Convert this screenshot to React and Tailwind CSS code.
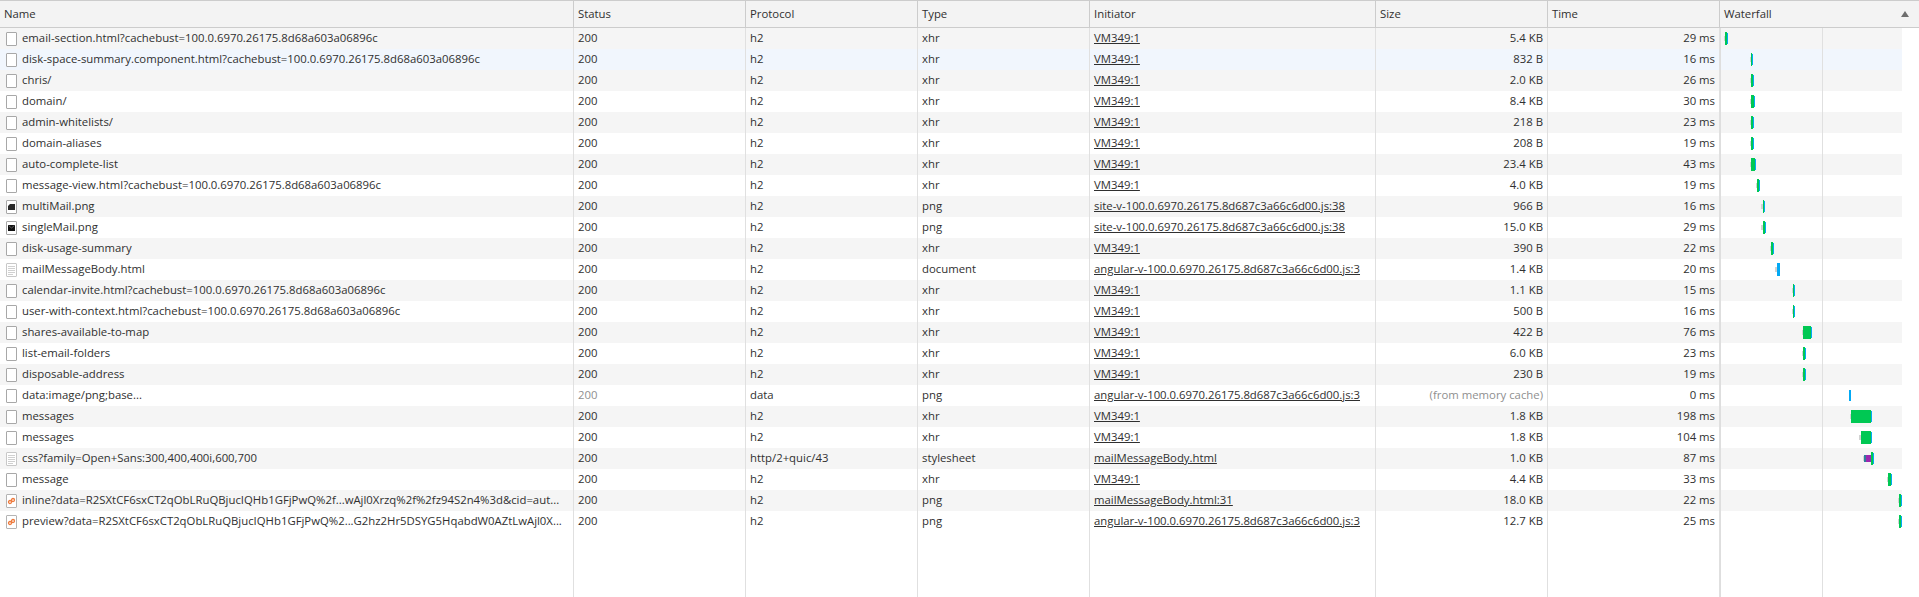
const COLS = "grid grid-cols-[574px_172px_172px_172px_286px_172px_172px_183px]";

const SITE = "site-v-100.0.6970.26175.8d687c3a66c6d00.js:38";
const NG = "angular-v-100.0.6970.26175.8d687c3a66c6d00.js:3";
const BODY = "mailMessageBody.html";
const VM = "VM349:1";

// gray = queued, green = waiting, blue = download; [start x, end x] in page pixels
const ROWS = [
  { name: "email-section.html?cachebust=100.0.6970.26175.8d68a603a06896c", proto: "h2", type: "xhr", init: VM, size: "5.4 KB", time: "29 ms", gray: [1724, 1725], green: [1725, 1727], blue: [1727, 1728] },
  { name: "disk-space-summary.component.html?cachebust=100.0.6970.26175.8d68a603a06896c", proto: "h2", type: "xhr", init: VM, size: "832 B", time: "16 ms", hover: true, gray: [1750, 1751], green: [1751, 1752], blue: [1752, 1753] },
  { name: "chris/", proto: "h2", type: "xhr", init: VM, size: "2.0 KB", time: "26 ms", gray: [1750, 1751], green: [1751, 1753], blue: [1753, 1754] },
  { name: "domain/", proto: "h2", type: "xhr", init: VM, size: "8.4 KB", time: "30 ms", gray: [1750, 1751], green: [1751, 1754], blue: [1754, 1755] },
  { name: "admin-whitelists/", proto: "h2", type: "xhr", init: VM, size: "218 B", time: "23 ms", gray: [1750, 1751], green: [1751, 1753], blue: [1753, 1754] },
  { name: "domain-aliases", proto: "h2", type: "xhr", init: VM, size: "208 B", time: "19 ms", gray: [1750, 1751], green: [1751, 1753], blue: [1753, 1754] },
  { name: "auto-complete-list", proto: "h2", type: "xhr", init: VM, size: "23.4 KB", time: "43 ms", gray: [1750, 1751], green: [1751, 1755], blue: [1755, 1756] },
  { name: "message-view.html?cachebust=100.0.6970.26175.8d68a603a06896c", proto: "h2", type: "xhr", init: VM, size: "4.0 KB", time: "19 ms", gray: [1756, 1757], green: [1757, 1759], blue: [1759, 1760] },
  { name: "multiMail.png", icon: "multi", proto: "h2", type: "png", init: SITE, size: "966 B", time: "16 ms", gray: [1761, 1763], green: [1763, 1764], blue: [1764, 1765] },
  { name: "singleMail.png", icon: "single", proto: "h2", type: "png", init: SITE, size: "15.0 KB", time: "29 ms", gray: [1761, 1763], green: [1763, 1765], blue: [1765, 1766] },
  { name: "disk-usage-summary", proto: "h2", type: "xhr", init: VM, size: "390 B", time: "22 ms", gray: [1770, 1771], green: [1771, 1773], blue: [1773, 1774] },
  { name: "mailMessageBody.html", icon: "lines", proto: "h2", type: "document", init: NG, size: "1.4 KB", time: "20 ms", gray: [1775, 1777], blue: [1777, 1780], tallBlue: true },
  { name: "calendar-invite.html?cachebust=100.0.6970.26175.8d68a603a06896c", proto: "h2", type: "xhr", init: VM, size: "1.1 KB", time: "15 ms", gray: [1792, 1793], green: [1793, 1794], blue: [1794, 1795] },
  { name: "user-with-context.html?cachebust=100.0.6970.26175.8d68a603a06896c", proto: "h2", type: "xhr", init: VM, size: "500 B", time: "16 ms", gray: [1792, 1793], green: [1793, 1794], blue: [1794, 1795] },
  { name: "shares-available-to-map", proto: "h2", type: "xhr", init: VM, size: "422 B", time: "76 ms", gray: [1802, 1803], green: [1803, 1811], blue: [1811, 1812] },
  { name: "list-email-folders", proto: "h2", type: "xhr", init: VM, size: "6.0 KB", time: "23 ms", gray: [1802, 1803], green: [1803, 1805], blue: [1805, 1806] },
  { name: "disposable-address", proto: "h2", type: "xhr", init: VM, size: "230 B", time: "19 ms", gray: [1802, 1803], green: [1803, 1805], blue: [1805, 1806] },
  { name: "data:image/png;base...", proto: "data", type: "png", init: NG, size: "(from memory cache)", time: "0 ms", cached: true, blue: [1849, 1851] },
  { name: "messages", proto: "h2", type: "xhr", init: VM, size: "1.8 KB", time: "198 ms", gray: [1850, 1851], green: [1851, 1871], blue: [1871, 1872] },
  { name: "messages", proto: "h2", type: "xhr", init: VM, size: "1.8 KB", time: "104 ms", gray: [1859, 1861], green: [1861, 1871], blue: [1871, 1872] },
  { name: "css?family=Open+Sans:300,400,400i,600,700", icon: "lines", proto: "http/2+quic/43", type: "stylesheet", init: BODY, size: "1.0 KB", time: "87 ms", gray: [1863, 1865], ssl: true, green: [1871, 1873], blue: [1873, 1874] },
  { name: "message", proto: "h2", type: "xhr", init: VM, size: "4.4 KB", time: "33 ms", gray: [1887, 1888], green: [1888, 1891], blue: [1891, 1892] },
  { name: "inline?data=R2SXtCF6sxCT2qObLRuQBjucIQHb1GFjPwQ%2f...wAjl0Xrzq%2f%2fz94S2n4%3d&cid=aut...", icon: "image", proto: "h2", type: "png", init: "mailMessageBody.html:31", size: "18.0 KB", time: "22 ms", gray: [1898, 1899], green: [1899, 1901], blue: [1901, 1902] },
  { name: "preview?data=R2SXtCF6sxCT2qObLRuQBjucIQHb1GFjPwQ%2...G2hz2Hr5DSYG5HqabdW0AZtLwAjl0X...", icon: "image", proto: "h2", type: "png", init: NG, size: "12.7 KB", time: "25 ms", gray: [1898, 1899], green: [1899, 1901], blue: [1901, 1902] },
];

function FileIcon({ kind }) {
  const border = kind === "lines" ? "#c8c8c8" : kind === "image" ? "#b4b4b4" : "#a8a8a8";
  return (
    <svg width="11" height="14" viewBox="0 0 11 14" className="shrink-0">
      <rect x="0.5" y="0.5" width="10" height="13" rx="0.5" fill="#fff" stroke={border} />
      {kind === "lines" && (
        <path d="M2 3.5h7M2 5.5h7M2 7.5h7M2 9.5h7M2 11.5h5" stroke="#d0d0d0" fill="none" />
      )}
      {kind === "multi" && <path d="M2 6l2-2h5v6H2z" fill="#2a2a2a" />}
      {kind === "single" && (
        <g>
          <rect x="2" y="4" width="7" height="6" fill="#111" />
          <path d="M2.5 4.5L5.5 7l3-2.5" stroke="#777" fill="none" strokeWidth="0.7" />
        </g>
      )}
      {kind === "image" && (
        <g fill="none" stroke="#ee7a3c" strokeWidth="1.3">
          <circle cx="4" cy="8" r="1.5" />
          <circle cx="7" cy="6" r="1.5" />
        </g>
      )}
    </svg>
  );
}

function Bar({ from, to, top, height, color }) {
  // the waterfall cell's padding box starts at x=1721, after its 1px left border
  return (
    <div
      className="absolute"
      style={{ left: from - 1721, width: to - from, top, height, background: color }}
    />
  );
}

function Waterfall({ row }) {
  return (
    <div className="relative border-l border-[#dedede]">
      {row.gray && <Bar from={row.gray[0]} to={row.gray[1]} top={8} height={5} color="#d2d2d2" />}
      {row.ssl && <Bar from={1864} to={1866} top={7} height={7} color="#2f7d9a" />}
      {row.ssl && <Bar from={1866} to={1871} top={7} height={7} color="#9c27b0" />}
      {row.green && <Bar from={row.green[0]} to={row.green[1]} top={4} height={13} color="#00c853" />}
      {row.blue && (
        <Bar
          from={row.blue[0]}
          to={row.blue[1]}
          top={row.tallBlue ? 4 : 5}
          height={row.tallBlue ? 13 : 11}
          color="#03a9f4"
        />
      )}
    </div>
  );
}

function Cell({ children, right, muted, className = "" }) {
  return (
    <div
      className={`flex items-center overflow-hidden whitespace-nowrap border-r border-[#e0e0e0] px-1 ${
        right ? "justify-end" : ""
      } ${muted ? "text-[#8f8f8f]" : ""} ${className}`}
    >
      {children}
    </div>
  );
}

function Row({ row, index }) {
  const bg = row.hover ? "bg-[#f1f6fd]" : index % 2 === 0 ? "bg-[#f5f5f5]" : "bg-white";
  return (
    <div className={`${COLS} h-[21px] w-[1902px] ${bg}`}>
      <Cell className="gap-[5px] !pl-[6px]">
        <FileIcon kind={row.icon} />
        <span>{row.name}</span>
      </Cell>
      <Cell muted={row.cached}>200</Cell>
      <Cell>{row.proto}</Cell>
      <Cell>{row.type}</Cell>
      <Cell>
        <span className="underline">{row.init}</span>
      </Cell>
      <Cell right muted={row.cached}>
        {row.size}
      </Cell>
      <Cell right>{row.time}</Cell>
      <Waterfall row={row} />
    </div>
  );
}

function HeadCell({ children }) {
  return <div className="flex items-center border-r border-[#cccccc] px-1">{children}</div>;
}

export default function App() {
  return (
    <div className="relative flex h-[597px] w-full flex-col overflow-hidden bg-white font-['Open_Sans',sans-serif] text-[11.35px] leading-[16.8px] text-[#303030]">
      <div className="flex h-[28px] shrink-0 border-y border-[#cccccc] bg-[#f3f3f3]">
        <div className="grid grid-cols-[574px_172px_172px_172px_286px_172px_172px] ">
          <HeadCell>Name</HeadCell>
          <HeadCell>Status</HeadCell>
          <HeadCell>Protocol</HeadCell>
          <HeadCell>Type</HeadCell>
          <HeadCell>Initiator</HeadCell>
          <HeadCell>Size</HeadCell>
          <HeadCell>Time</HeadCell>
        </div>
        <div className="flex flex-1 items-center justify-between pl-1 pr-[10px]">
          <span>Waterfall</span>
          <svg width="8" height="6" viewBox="0 0 8 6">
            <path d="M4 0l4 6H0z" fill="#6e6e6e" />
          </svg>
        </div>
      </div>

      <div className="relative flex min-h-0 flex-1 flex-col">
        {ROWS.map((row, i) => (
          <Row key={i} row={row} index={i} />
        ))}
        <div className={`${COLS} w-[1902px] flex-1`}>
          <Cell />
          <Cell />
          <Cell />
          <Cell />
          <Cell />
          <Cell />
          <Cell />
          <div className="border-l border-[#dedede]" />
        </div>
        {/* waterfall time divider */}
        <div className="absolute bottom-0 left-[1822px] top-0 w-px bg-[#e0e0e0]" />
      </div>
    </div>
  );
}
